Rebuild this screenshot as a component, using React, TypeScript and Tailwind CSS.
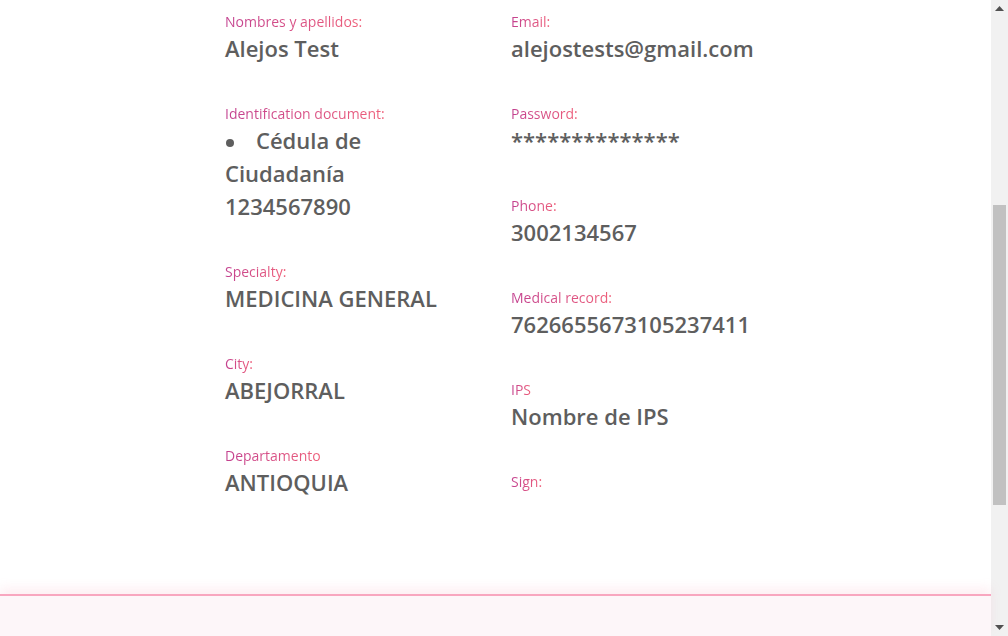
import React from 'react';

type Field = { label: string; value?: React.ReactNode };

const LEFT: Field[] = [
  { label: 'Nombres y apellidos:', value: 'Alejos Test' },
  {
    label: 'Identification document:',
    value: (
      <>
        <span>
          <span className="ml-[1px] mr-[22px] inline-block h-[8px] w-[8px] rounded-full bg-[#5e5e5e] align-middle" />
          Cédula de Ciudadanía
        </span>
        <br />
        1234567890
      </>
    ),
  },
  { label: 'Specialty:', value: 'MEDICINA GENERAL' },
  { label: 'City:', value: 'ABEJORRAL' },
  { label: 'Departamento', value: 'ANTIOQUIA' },
];

const RIGHT: Field[] = [
  { label: 'Email:', value: 'alejostests@gmail.com' },
  { label: 'Password:', value: '**************' },
  { label: 'Phone:', value: '3002134567' },
  { label: 'Medical record:', value: '7626655673105237411' },
  { label: 'IPS', value: 'Nombre de IPS' },
  { label: 'Sign:' },
];

const InfoItem: React.FC<{ field: Field }> = ({ field }) => (
  <div className="mb-[39px]">
    <span className="block w-fit bg-gradient-to-r from-[#c2408f] to-[#ef5f79] bg-clip-text text-[14px] leading-[19px] text-transparent">
      {field.label}
    </span>
    {field.value && (
      <div className="mt-[1px] text-[22px] font-semibold leading-[33px] text-[#5e5e5e]">{field.value}</div>
    )}
  </div>
);

const Scrollbar: React.FC = () => (
  <div className="flex w-[17px] flex-col items-center bg-[#f1f1f1]">
    <div className="flex h-[17px] w-full items-center justify-center">
      <svg width="9" height="5" viewBox="0 0 9 5">
        <path d="M0 5 L4.5 0 L9 5 Z" fill="#505050" />
      </svg>
    </div>
    <div className="h-[188px]" />
    <div className="h-[300px] w-[13px] bg-[#c1c1c1]" />
    <div className="flex-1" />
    <div className="flex h-[17px] w-full items-center justify-center">
      <svg width="9" height="5" viewBox="0 0 9 5">
        <path d="M0 0 L9 0 L4.5 5 Z" fill="#505050" />
      </svg>
    </div>
  </div>
);

const App: React.FC = () => {
  return (
    <div className="flex h-[636px] w-[1008px] overflow-hidden bg-white font-['Open_Sans',sans-serif]">
      <div className="flex flex-1 flex-col">
        {/* Profile info */}
        <main className="flex-1 pl-[225px] pt-[12px]">
          <div className="grid grid-cols-[286px_286px]">
            <div className="pr-[40px]">
              {LEFT.map(f => (
                <InfoItem key={f.label} field={f} />
              ))}
            </div>
            <div>
              {RIGHT.map(f => (
                <InfoItem key={f.label} field={f} />
              ))}
            </div>
          </div>
        </main>

        {/* Footer */}
        <footer className="relative h-[42px] border-t-2 border-[#f8a6bf] bg-[#fdf6f9] shadow-[0_-6px_10px_rgba(248,166,191,0.18)]" />
      </div>
      <Scrollbar />
    </div>
  );
};

export default App;
